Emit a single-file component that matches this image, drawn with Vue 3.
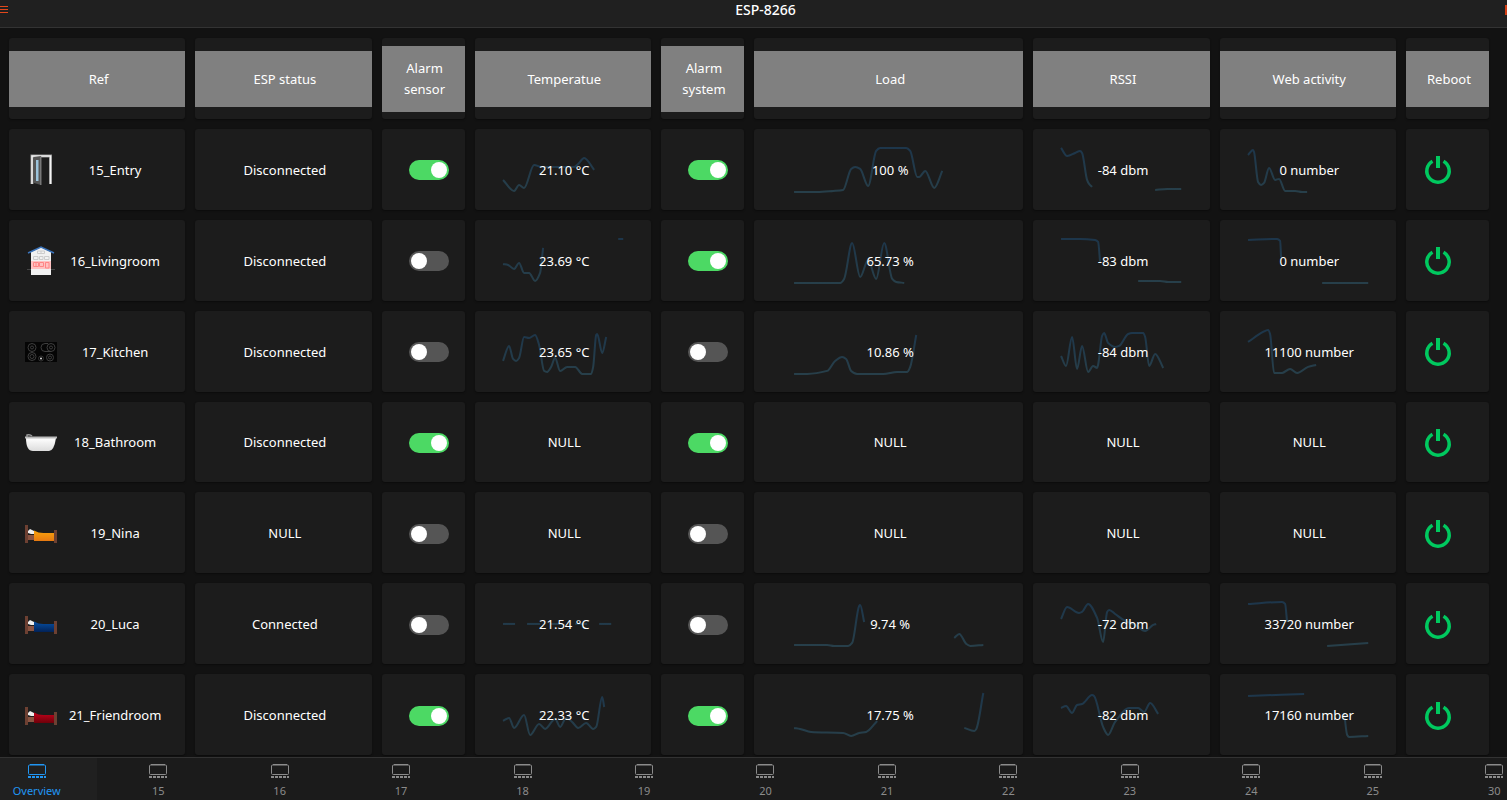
<script setup>
import { reactive } from 'vue'

const columns = [
  { title: 'Ref', span: 'span-2' },
  { title: 'ESP status', span: 'span-2' },
  { title: 'Alarm sensor', span: 'span-1' },
  { title: 'Temperatue', span: 'span-2' },
  { title: 'Alarm system', span: 'span-1' },
  { title: 'Load', span: 'span-3' },
  { title: 'RSSI', span: 'span-2' },
  { title: 'Web activity', span: 'span-2' },
  { title: 'Reboot', span: 'span-1' },
]

// Each metric: text value plus trend segments as [x, y] samples.
const metric = (key, width, value, ...segments) => ({ key, width, value, segments })
const temp = (value, ...s) => metric('temp', 176, value, ...s)
const load = (value, ...s) => metric('load', 269, value, ...s)
const rssi = (value, ...s) => metric('rssi', 176, value, ...s)
const web = (value, ...s) => metric('web', 176, value, ...s)

const rows = reactive([
  {
    name: '15_Entry', icon: 'door', status: 'Disconnected', sensor: true, system: true,
    temp: temp('21.10 °C', [[28, 51], [39, 62], [44, 56], [49, 59], [59, 36], [66, 38], [99, 38], [103, 35], [109, 29], [119, 41]]),
    load: load('100 %', [[40, 63], [63, 63], [79, 62], [89, 61], [97, 40], [101, 38], [106, 40], [114, 57], [122, 22], [126, 19], [152, 19], [156, 22], [163, 48], [165, 48], [171, 42], [180, 59], [188, 42]]),
    rssi: rssi('-84 dbm', [[28, 19], [34, 27], [42, 24], [47, 22], [49, 24], [54, 51], [56, 55], [59, 58]], [[122, 61], [134, 60], [148, 60]]),
    web: web('0 number', [[28, 26], [33, 21], [34, 23], [38, 53], [41, 56], [44, 54], [49, 39], [55, 51], [59, 50], [65, 62], [75, 62], [82, 63], [87, 63]]),
  },
  {
    name: '16_Livingroom', icon: 'house', status: 'Disconnected', sensor: false, system: true,
    temp: temp('23.69 °C', [[28, 44], [33, 45], [39, 49], [44, 43], [49, 53], [54, 53], [60, 61], [65, 53], [67, 37], [68, 28]], [[143, 19], [148, 19]]),
    load: load('65.73 %', [[40, 63], [59, 63], [73, 63], [86, 63], [90, 59], [98, 23], [106, 57], [114, 40], [122, 59], [130, 23], [138, 59], [142, 62], [150, 63]]),
    rssi: rssi('-83 dbm', [[28, 19], [39, 19], [47, 19], [62, 20], [65, 22], [67, 42]], [[105, 61], [127, 61], [135, 62], [148, 62]]),
    web: web('0 number', [[28, 20], [57, 19], [60, 21], [61, 37]], [[102, 63], [148, 63]]),
  },
  {
    name: '17_Kitchen', icon: 'hob', status: 'Disconnected', sensor: false, system: false,
    temp: temp('23.65 °C', [[28, 50], [34, 35], [38, 48], [41, 50], [44, 47], [49, 26], [54, 27], [60, 24], [64, 34], [69, 60], [72, 61], [76, 56], [80, 47], [85, 60], [92, 56], [100, 56], [107, 63], [116, 63], [118, 56], [121, 24], [122, 23], [127, 42], [131, 26]]),
    load: load('10.86 %', [[40, 63], [53, 63], [73, 60], [81, 50], [88, 46], [92, 48], [97, 60], [103, 63], [129, 63], [143, 61], [153, 61], [156, 56], [162, 24]]),
    rssi: rssi('-84 dbm', [[28, 45], [33, 55], [39, 26], [44, 58], [49, 35], [55, 61], [60, 55], [64, 57], [65, 54], [69, 25], [71, 22], [75, 32], [82, 36], [86, 35], [95, 23], [99, 22], [110, 22], [112, 26], [116, 55], [122, 43], [130, 57]]),
    web: web('11100 number', [[28, 31], [43, 21], [48, 19], [50, 23], [54, 62], [62, 62], [70, 58], [77, 62], [88, 56], [96, 54]]),
  },
  {
    name: '18_Bathroom', icon: 'bath', status: 'Disconnected', sensor: true, system: true,
    temp: temp('NULL'), load: load('NULL'), rssi: rssi('NULL'), web: web('NULL'),
  },
  {
    name: '19_Nina', icon: 'bed', blanket: 'amber', status: 'NULL', sensor: false, system: false,
    temp: temp('NULL'), load: load('NULL'), rssi: rssi('NULL'), web: web('NULL'),
  },
  {
    name: '20_Luca', icon: 'bed', blanket: 'blue', status: 'Connected', sensor: false, system: false,
    temp: temp('21.54 °C', [[28, 41], [40, 41]], [[52, 41], [65, 41]], [[76, 41], [88, 41]], [[100, 41], [112, 41]], [[124, 41], [136, 41]]),
    load: load('9.74 %', [[40, 62], [73, 62], [80, 63], [94, 63], [98, 60], [105, 23], [106, 22], [110, 39]], [[200, 55], [205, 51], [212, 61], [216, 63], [229, 62]]),
    rssi: rssi('-72 dbm', [[28, 36], [34, 24], [46, 30], [49, 29], [55, 21], [64, 35], [70, 59], [74, 29], [76, 27], [82, 31], [92, 38], [102, 42], [112, 48], [120, 42], [123, 41]]),
    web: web('33720 number', [[28, 21], [62, 19], [65, 21], [67, 39]], [[107, 63], [148, 60]]),
  },
  {
    name: '21_Friendroom', icon: 'bed', blanket: 'red', status: 'Disconnected', sensor: true, system: true,
    temp: temp('22.33 °C', [[28, 47], [34, 44], [39, 54], [49, 41], [55, 61], [64, 50], [70, 55], [80, 45], [85, 53], [91, 44], [97, 48], [103, 54], [111, 49], [118, 55], [121, 53], [127, 23], [129, 33]]),
    load: load('17.75 %', [[40, 54], [46, 55], [57, 58], [89, 59], [97, 62], [105, 59], [112, 58], [123, 47]], [[210, 54], [220, 57], [222, 55], [229, 19]]),
    rssi: rssi('-82 dbm', [[28, 34], [33, 32], [39, 39], [44, 31], [49, 30], [59, 21], [61, 22], [70, 53], [75, 61], [82, 48], [96, 34], [105, 34], [111, 38], [117, 29], [125, 40]]),
    web: web('17160 number', [[28, 22], [84, 20]], [[124, 39], [127, 61], [129, 63], [148, 62]]),
  },
])

const tabs = ['Overview', '15', '16', '17', '18', '19', '20', '21', '22', '23', '24', '25', '30']

// Monotone cubic interpolation, so curves never overshoot their samples.
function smooth(points) {
  const n = points.length
  const slope = []
  for (let i = 0; i < n - 1; i++) {
    slope.push((points[i + 1][1] - points[i][1]) / (points[i + 1][0] - points[i][0]))
  }
  const tangent = points.map((_, i) => {
    if (i === 0) return slope[0]
    if (i === n - 1) return slope[n - 2]
    const a = slope[i - 1]
    const b = slope[i]
    return a * b <= 0 ? 0 : (2 * a * b) / (a + b)
  })
  let d = `M${points[0][0]} ${points[0][1]}`
  for (let i = 0; i < n - 1; i++) {
    const [x0, y0] = points[i]
    const [x1, y1] = points[i + 1]
    const h = (x1 - x0) / 3
    d += `C${x0 + h} ${y0 + h * tangent[i]} ${x1 - h} ${y1 - h * tangent[i + 1]} ${x1} ${y1}`
  }
  return d
}
</script>

<template>
  <div class="page">
    <header class="navbar">
      <button class="nav-btn menu" type="button" aria-label="Menu">
        <svg width="8" height="8" viewBox="0 0 8 8"><path d="M0 .5H8M0 3.5H8M0 6.5H8" stroke="#e2471b" /></svg>
      </button>
      <h1>ESP-8266</h1>
      <button class="nav-btn more" type="button" aria-label="Options">
        <svg width="2" height="10" viewBox="0 0 2 10"><path d="M0 0H2V10H0Z" fill="#d23e14" /></svg>
      </button>
    </header>

    <main>
      <svg class="defs" width="0" height="0" aria-hidden="true">
        <defs>
          <linearGradient id="trend" gradientUnits="userSpaceOnUse" x1="0" y1="19" x2="0" y2="63">
            <stop offset="0" stop-color="#1d364b" />
            <stop offset="1" stop-color="#273f4a" />
          </linearGradient>
          <linearGradient id="amber" x2="0" y2="1"><stop stop-color="#f9a30c" /><stop offset="1" stop-color="#e67912" /></linearGradient>
          <linearGradient id="blue" x2="0" y2="1"><stop stop-color="#0650a4" /><stop offset="1" stop-color="#022257" /></linearGradient>
          <linearGradient id="red" x2="0" y2="1"><stop stop-color="#c4021c" /><stop offset="1" stop-color="#6e0009" /></linearGradient>
          <linearGradient id="enamel" x2="0" y2="1"><stop stop-color="#fff" /><stop offset="1" stop-color="#dcdcdc" /></linearGradient>
        </defs>
      </svg>

      <table>
        <thead>
          <tr>
            <th v-for="c in columns" :key="c.title" :class="c.span" scope="col"><span>{{ c.title }}</span></th>
          </tr>
        </thead>
        <tbody>
          <tr v-for="row in rows" :key="row.name">
            <td class="span-2 ref">
              <svg class="media" viewBox="0 0 32 32" aria-hidden="true">
                <g v-if="row.icon === 'door'">
                  <path d="M7 30V2H25.500V30" fill="none" stroke="#8f8f8f" stroke-width="3" />
                  <path d="M7 30V2H25.500V30" fill="none" stroke="#f4f4f4" stroke-width="1.500" />
                  <path d="M9 3L16 2V31L9 29Z" fill="#555" />
                  <path d="M15 2.500H16.500V31H15Z" fill="#777" />
                  <path d="M11 6H13.500V27H11Z" fill="#9cc4dc" />
                </g>
                <g v-else-if="row.icon === 'house'">
                  <path d="M6 7L16 2L26 7V30H6Z" fill="#f1f1f1" />
                  <path d="M3 8L16 2L29 8" fill="none" stroke="#3b73b9" stroke-width="1.500" />
                  <path d="M6 16H26V24H6Z" fill="#ffc1c1" />
                  <path d="M8.500 11.500H13V14.500H8.500ZM14.500 11.500H18V14.500H14.500ZM19.500 11.500H24V14.500H19.500ZM12.500 6H19.500V8.500H12.500ZM16 6V8.500" fill="none" stroke="#ccc" />
                  <path d="M8.500 17.500H13.500V21.500H8.500ZM14.500 17.500H18.500V21.500H14.500ZM20.500 17.500H24V23H20.500ZM11 17.500V21.500" fill="none" stroke="#ff8585" />
                  <path d="M2 24.500H6M26 24.500H30" stroke="#454545" />
                </g>
                <g v-else-if="row.icon === 'hob'">
                  <rect y="6" width="32" height="20" fill="#050505" />
                  <g fill="none" stroke="#3e3e3e">
                    <circle cx="7" cy="11.500" r="4" /><circle cx="7" cy="11.500" r="1.500" />
                    <circle cx="7" cy="20.500" r="4" /><circle cx="7" cy="20.500" r="2" />
                    <circle cx="26" cy="11.500" r="4" /><circle cx="26" cy="11.500" r="1.500" />
                    <path d="M23 7.500H20A4 4 0 0 0 20 15.500H26" />
                    <circle cx="25" cy="21.500" r="3.500" /><circle cx="25" cy="21.500" r="1.500" />
                    <circle cx="16" cy="22.500" r="2.500" stroke="#333" />
                  </g>
                  <circle cx="16" cy="22.500" r="1" fill="#ddd" />
                </g>
                <g v-else-if="row.icon === 'bath'">
                  <path d="M1 11Q1 24 8 24H24Q29 24 31 11Z" fill="url(#enamel)" />
                  <path d="M0 10.500H32" stroke="#bbb" stroke-width="2" />
                  <path d="M2 10V8Q5 7 7 9" fill="none" stroke="#999" stroke-width="1.500" />
                </g>
                <g v-else>
                  <path d="M2 17H10V22H2Z" fill="#8a5442" />
                  <path d="M0 7H3V25H0ZM29 12H32V25H29Z" fill="#6d4032" />
                  <path d="M3 13L5 11L9 13V16L6 16L3 15Z" fill="#eee" />
                  <path d="M9 12.500Q14 15.500 20 15H29V23H9Z" :fill="`url(#${row.blanket})`" />
                </g>
              </svg>
              <span>{{ row.name }}</span>
            </td>
            <td class="span-2">{{ row.status }}</td>
            <td class="span-1 switch">
              <input v-model="row.sensor" type="checkbox" role="switch" :aria-label="`Alarm sensor ${row.name}`" />
            </td>
            <template v-for="m in [row.temp, 'system', row.load, row.rssi, row.web]" :key="m.key || m">
              <td v-if="m === 'system'" class="span-1 switch">
                <input v-model="row.system" type="checkbox" role="switch" :aria-label="`Alarm system ${row.name}`" />
              </td>
              <td v-else :class="m.key === 'load' ? 'span-3' : 'span-2'">
                <svg v-if="m.segments.length" class="trend" :viewBox="`0 0 ${m.width} 81`" preserveAspectRatio="none" aria-hidden="true">
                  <path v-for="(s, i) in m.segments" :key="i" :d="smooth(s)" />
                </svg>
                <span class="value">{{ m.value }}</span>
              </td>
            </template>
            <td class="span-1 reboot">
              <button type="button" :aria-label="`Reboot ${row.name}`">
                <svg width="32" height="32" viewBox="0 0 32 32" fill="none" stroke="#00c95f">
                  <path d="M16 2V14" stroke-width="4" />
                  <path d="M10.500 7.300A11.200 11.200 0 1 0 21.500 7.300" stroke-width="3.500" />
                </svg>
              </button>
            </td>
          </tr>
        </tbody>
      </table>
    </main>

    <nav class="tabbar">
      <div class="tabs">
        <a v-for="(t, i) in tabs" :key="t" href="#" :class="{ active: i === 0 }">
          <svg width="18" height="14" viewBox="0 0 18 14" fill="none" stroke="currentColor" aria-hidden="true">
            <rect x="0.500" y="1" width="17" height="9.500" rx="1" />
            <path d="M2 .5H16" />
            <path d="M0 13H18" stroke-width="2" stroke-dasharray="3 1" />
          </svg>
          <span>{{ t }}</span>
        </a>
      </div>
    </nav>
  </div>
</template>

<style>
body {
  background: #121212;
}
</style>

<style scoped>
.page {
  display: flex;
  flex-direction: column;
  height: 100vh;
  overflow: hidden;
  background: #121212;
  color: #fff;
  font-family: 'Noto Sans', 'Open Sans', sans-serif;
  font-size: 13px;
  line-height: 21px;
}

button {
  display: block;
  padding: 0;
  border: 0;
  background: none;
  cursor: pointer;
}

button svg {
  display: block;
}

.navbar {
  display: flex;
  align-items: center;
  padding-bottom: 7px;
  border-bottom: 1px solid #333;
  background: #202020;
}

.navbar h1 {
  flex: 1;
  margin: 0;
  padding-left: 18px;
  font-size: 14px;
  font-weight: 500;
  line-height: 20px;
  text-align: center;
}

main {
  flex: 1;
  display: flex;
  min-height: 0;
  padding: 10px 18px 2px 9px;
}

.defs {
  position: absolute;
}

table {
  flex: 1;
  display: grid;
  grid-template-columns: repeat(16, minmax(0, 1fr));
  grid-auto-rows: minmax(0, 1fr);
  gap: 10px;
}

thead,
tbody,
tr {
  display: contents;
}

th,
td {
  position: relative;
  display: flex;
  align-items: center;
  justify-content: center;
  padding: 2px 0 0 3px;
  border-radius: 3px;
  background: #1c1c1c;
  box-shadow: 0 1px 2px rgba(0, 0, 0, 0.4);
  text-align: center;
}

th {
  padding: 2px 0 0;
  font-weight: 400;
}

th span {
  flex: 1;
  display: flex;
  align-items: center;
  justify-content: center;
  min-height: 32px;
  padding: 12px 13px 12px 16px;
  background: #808080;
}

.span-1 {
  grid-column: span 1;
}

.span-2 {
  grid-column: span 2;
}

.span-3 {
  grid-column: span 3;
}

.ref {
  padding: 2px 12px 0 16px;
}

.ref span {
  flex: 1;
}

.media {
  width: 32px;
  height: 32px;
}

.switch {
  padding-left: 11px;
}

.switch input {
  appearance: none;
  width: 40px;
  height: 20px;
  margin: 0;
  padding: 2px;
  border-radius: 10px;
  background: #555;
  cursor: pointer;
}

.switch input::before {
  content: '';
  display: block;
  width: 16px;
  height: 16px;
  border-radius: 50%;
  background: #fff;
}

.switch input:checked {
  background: #4cd964;
}

.switch input:checked::before {
  margin-left: 20px;
}

.trend {
  position: absolute;
  inset: 0;
  width: 100%;
  height: 100%;
}

.trend path {
  fill: none;
  stroke: url(#trend);
  stroke-width: 2px;
  vector-effect: non-scaling-stroke;
}

.value {
  position: relative;
}

.reboot {
  justify-content: flex-start;
  padding-left: 16px;
}

.tabbar {
  overflow: hidden;
  border-top: 1px solid #333;
  background: #1b1b1b;
}

.tabs {
  display: grid;
  grid-template-columns: repeat(13, 1fr);
  margin: 0 -48px 0 -24px;
}

.tabs a {
  display: flex;
  flex-direction: column;
  align-items: center;
  gap: 5px;
  padding: 6px 0 1px;
  color: #8b8b8b;
  font-size: 11px;
  line-height: 16px;
  text-decoration: none;
}

.tabs a.active {
  background: #202020;
  color: #2196f3;
}
</style>
